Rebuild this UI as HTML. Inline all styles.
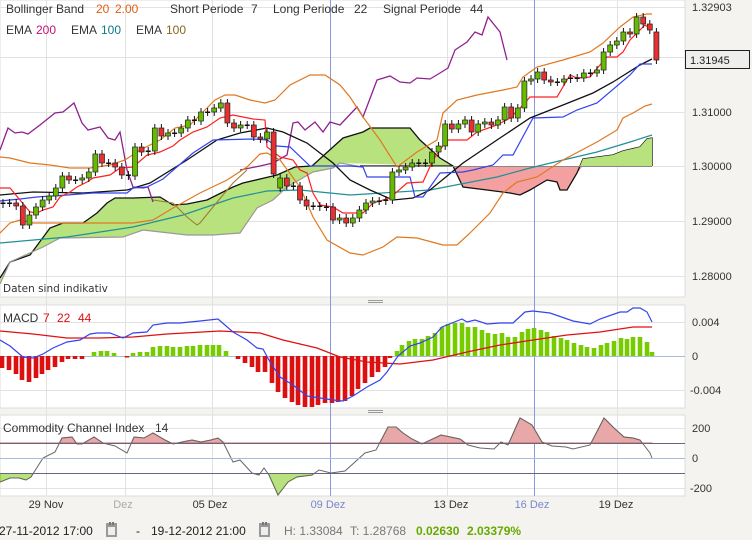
<!DOCTYPE html>
<html><head><meta charset="utf-8"><style>
html,body{margin:0;padding:0;background:#f4f3ef;}
svg{display:block;font-family:"Liberation Sans",sans-serif;}
</style></head><body>
<svg id="s" width="752" height="540" xmlns="http://www.w3.org/2000/svg">
<rect width="752" height="540" fill="#f4f3ef"/>
<rect x="0" y="0" width="685" height="297" fill="#fff" stroke="#dcdcdc"/>
<rect x="0" y="305" width="685" height="103" fill="#fff" stroke="#dcdcdc"/>
<rect x="0" y="415" width="685" height="81" fill="#fff" stroke="#dcdcdc"/>
<g stroke="#999" stroke-width="1">
<line x1="368" y1="300.5" x2="383" y2="300.5"/><line x1="368" y1="302.5" x2="383" y2="302.5"/>
<line x1="368" y1="410.5" x2="383" y2="410.5"/><line x1="368" y1="412.5" x2="383" y2="412.5"/>
</g>
<g stroke="#e2e2e2" stroke-width="1">
<line x1="0" y1="7.5" x2="685" y2="7.5"/><line x1="0" y1="57.5" x2="685" y2="57.5"/><line x1="0" y1="112.5" x2="685" y2="112.5"/>
<line x1="0" y1="166.5" x2="685" y2="166.5"/><line x1="0" y1="221.5" x2="685" y2="221.5"/><line x1="0" y1="276.5" x2="685" y2="276.5"/>
<line x1="0" y1="322.5" x2="685" y2="322.5"/><line x1="0" y1="390.5" x2="685" y2="390.5"/>
<line x1="0" y1="428.5" x2="685" y2="428.5"/><line x1="0" y1="488.5" x2="685" y2="488.5"/>
<line x1="46.5" y1="0" x2="46.5" y2="496"/><line x1="125.5" y1="0" x2="125.5" y2="496"/><line x1="212.5" y1="0" x2="212.5" y2="496"/>
<line x1="447.5" y1="0" x2="447.5" y2="496"/><line x1="617.5" y1="0" x2="617.5" y2="496"/>
</g>
<line x1="0" y1="356.5" x2="685" y2="356.5" stroke="#a8bcd8"/>
<g stroke="#8899dd" stroke-width="1"><line x1="330.5" y1="0" x2="330.5" y2="496"/><line x1="534.5" y1="0" x2="534.5" y2="496"/></g>

<polygon fill="#b8e27e" points="0,278 10,262 30,255 50,228 63,223 83,223 97,213 107,203 115,198 133,198 160,197 173,205 187,204 207,200 233,187 243,183 277,175 295,167 312,166 343,138 363,132 370,128 410,128 420,140 440,158 453,166 453,166 340,163 333,168 313,172 287,187 273,200 257,208 240,233 213,235 187,235 143,230 123,237 60,238 43,247 10,262 0,282"/>
<polyline fill="none" stroke="#111" stroke-width="1.3" points="0,278 10,262 30,255 50,228 63,223 83,223 97,213 107,203 115,198 133,198 160,197 173,205 187,204 207,200 233,187 243,183 277,175 295,167 312,166 343,138 363,132 370,128 410,128 420,140 440,158 453,166"/>
<polyline fill="none" stroke="#999" stroke-width="1.2" points="0,284 10,262 43,247 60,238 123,237 143,230 187,235 213,235 240,233 257,208 273,200 287,187 313,172 333,168 340,163 363,167"/>
<polygon fill="#f4a0a0" points="453,166 463,187 487,190 510,193 520,195 530,190 547,180 557,182 560,190 567,190 577,173 583,166"/>
<polyline fill="none" stroke="#111" stroke-width="1.3" points="360,166 453,166 463,187 487,190 510,193 520,195 530,190 547,180 557,182 560,190 567,190 577,173 583,159 613,155 623,151 640,147 647,139 652,138 652,166"/>
<polygon fill="#b8e27e" points="580,166 583,159 613,155 623,151 640,147 647,139 652,138 652,166"/>
<line x1="363" y1="166.5" x2="652" y2="166.5" stroke="#888"/>

<polyline fill="none" stroke="#209098" stroke-width="1.2" points="0,243 67,237 133,227 183,215 233,198 267,191 300,190 350,195 430,190 497,177 530,168 563,160 597,152 630,142 652,135"/>
<polyline fill="none" stroke="#a07a30" stroke-width="1.1" points="153,200 173,203 187,217 197,225 200,223 213,207 233,183 247,170"/>
<polyline fill="none" stroke="#902090" stroke-width="1.3" points="0,150 8,128 15,133 22,132 28,134 40,125 55,113 63,112 74,103 82,123 88,130 100,127 108,138 115,140 120,132 127,170 133,187 143,188 148,187 153,202"/>
<polyline fill="none" stroke="#902090" stroke-width="1.3" points="240,170 260,166 273,163 287,155 293,123 298,122 305,130 315,122 323,132 330,122 340,125 357,107 363,117 377,80 390,76 400,82 410,83 417,78 430,79 440,73 448,68 455,50 467,42 475,32 482,35 488,17 500,32 507,60"/>
<polyline fill="none" stroke="#e07820" stroke-width="1.2" points="0,157 10,158 30,163 50,165 70,168 90,168 110,165 125,160 140,150 160,140 175,128 190,125 200,115 215,100 225,95 235,95 250,100 265,103 275,100 290,85 310,75 325,75 340,85 350,97 363,117 380,140 397,167"/>
<polyline fill="none" stroke="#e07820" stroke-width="1.2" points="397,167 417,152 437,140 443,113 457,100 477,95 503,90 517,87 523,77 537,67 563,60 590,52 603,43 620,27 633,17 647,14 652,14"/>
<polyline fill="none" stroke="#e07820" stroke-width="1.2" points="0,233 10,223 20,220 33,223 133,223 153,220 173,208 200,193 227,180 247,167 260,154 267,153 280,160 300,187 313,217 327,240 350,253 363,255 383,247 397,237 417,238 443,245 457,245 470,233 490,213 503,193 517,182 537,177 563,160 597,142 617,130 623,118 633,113 645,106 652,104"/>
<polyline fill="none" stroke="#111" stroke-width="1.3" points="0,195 33,192 83,193 127,190 150,183 187,160 217,140 240,133 267,128 283,132 307,143 333,163 350,180 370,190 393,200 413,198 430,190 463,163 497,140 530,118 563,105 593,93 613,82 640,65 652,59"/>
<polyline fill="none" stroke="#3344ee" stroke-width="1.2" points="0,201 20,199 37,197 67,195 93,193 127,193 133,188 147,187 163,179 193,153 213,140 253,139 267,140 277,146 290,147 310,166 350,166 363,167 367,177 410,177 415,197 423,197 440,173 463,172 473,170 493,165 503,155 513,155 533,118 563,117 577,110 597,103 630,75 640,64 652,64"/>
<polyline fill="none" stroke="#ff2020" stroke-width="1.2" points="0,188 10,188 20,200 30,212 37,213 43,210 53,207 60,197 70,192 77,187 87,182 93,178 110,175 120,168 133,167 147,155 160,152 173,146 180,140 193,132 207,127 220,118 233,115 253,119 265,120 267,147 280,157 293,160 300,170 307,173 313,193 320,205 333,207 343,213 363,213 373,203 390,198 407,183 423,182 433,160 447,140 467,140 477,132 497,125 510,118 523,105 530,97 557,97 570,75 577,78 590,77 600,65 607,57 617,57 623,52 630,40 645,25 652,30"/>
<g id="candles"></g>

<g id="hist"></g>
<polyline fill="none" stroke="#e01010" stroke-width="1.3" points="0,331 33,334 67,338 100,338 133,337 167,334 220,331 260,333 283,340 317,348 340,357 367,362 400,364 433,360 467,352 500,345 533,340 567,335 600,332 633,327 652,327"/>
<polyline fill="none" stroke="#3344ee" stroke-width="1.2" points="0,340 10,346 23,357 33,358 43,354 53,348 67,342 80,340 90,334 97,333 110,333 123,338 133,333 147,332 153,325 167,323 180,323 200,321 218,319 233,332 247,340 257,348 263,349 270,362 280,377 293,385 307,396 320,398 333,400 343,401 353,396 367,387 380,380 387,372 398,356 410,346 420,343 433,337 442,327 462,319 467,322 475,320 487,324 500,323 513,323 525,312 533,311 550,313 573,321 590,324 600,319 620,312 627,312 633,308 640,308 647,312 652,322"/>

<defs>
<clipPath id="up"><rect x="0" y="415" width="685" height="28"/></clipPath>
<clipPath id="dn"><rect x="0" y="473" width="685" height="25"/></clipPath>
</defs>
<g id="cci"></g>
<line x1="0" y1="443.5" x2="685" y2="443.5" stroke="#666680"/>
<line x1="0" y1="458.5" x2="685" y2="458.5" stroke="#a8bcd8"/>
<line x1="0" y1="473.5" x2="685" y2="473.5" stroke="#666680"/>

<g font-size="12" fill="#333">
<text x="6" y="13">Bollinger Band</text>
<text x="96" y="13" fill="#e06010">20</text>
<text x="115" y="13" fill="#e06010">2.00</text>
<text x="170" y="13">Short Periode</text>
<text x="251" y="13">7</text>
<text x="273" y="13">Long Periode</text>
<text x="354" y="13">22</text>
<text x="383" y="13">Signal Periode</text>
<text x="470" y="13">44</text>
<text x="6" y="34">EMA</text><text x="36" y="34" fill="#c0107a">200</text>
<text x="71" y="34">EMA</text><text x="101" y="34" fill="#107888">100</text>
<text x="136" y="34">EMA</text><text x="166" y="34" fill="#8a6420">100</text>
<text x="3" y="322">MACD</text>
<text x="43" y="322" fill="#dd1010">7</text><text x="57" y="322" fill="#dd1010">22</text><text x="78" y="322" fill="#dd1010">44</text>
<text x="3" y="432">Commodity Channel Index</text>
<text x="155" y="432">14</text>
</g>
<text x="3" y="292" font-size="10.5" font-family="DejaVu Sans,sans-serif" fill="#333">Daten sind indikativ</text>

<g font-size="11" fill="#333">
<text x="692" y="11">1.32903</text>
<text x="692" y="116">1.31000</text>
<text x="692" y="170">1.30000</text>
<text x="692" y="225">1.29000</text>
<text x="692" y="280">1.28000</text>
<text x="692" y="326">0.004</text>
<text x="692" y="360">0</text>
<text x="690" y="394">-0.004</text>
<text x="692" y="432">200</text>
<text x="692" y="462">0</text>
<text x="690" y="492">-200</text>
</g>
<rect x="685.5" y="50.5" width="64" height="18" fill="#eeeeec" stroke="#222"/>
<text x="690" y="64" font-size="11" fill="#222">1.31945</text>

<g font-size="11" fill="#333" text-anchor="middle">
<text x="46" y="508">29 Nov</text>
<text x="123" y="508" fill="#aaa">Dez</text>
<text x="210" y="508">05 Dez</text>
<text x="328" y="508" fill="#7788cc">09 Dez</text>
<text x="451" y="508">13 Dez</text>
<text x="532" y="508" fill="#7788cc">16 Dez</text>
<text x="616" y="508">19 Dez</text>
</g>

<g font-size="12" fill="#222">
<text x="-1" y="535">27-11-2012 17:00</text>
<text x="136" y="535">-</text>
<text x="151" y="535">19-12-2012 21:00</text>
<text x="284" y="535" fill="#777">H: 1.33084</text>
<text x="350" y="535" fill="#777">T: 1.28768</text>
<text x="416" y="535" fill="#66aa00" font-weight="bold">0.02630</text>
<text x="467" y="535" fill="#66aa00" font-weight="bold">2.03379%</text>
</g>
<g>
<rect x="106" y="523" width="11" height="14" fill="#999"/><rect x="108" y="527" width="7" height="8" fill="#eee"/><rect x="109" y="522" width="2" height="3" fill="#777"/><rect x="112" y="522" width="2" height="3" fill="#777"/>
<rect x="259" y="523" width="11" height="14" fill="#999"/><rect x="261" y="527" width="7" height="8" fill="#eee"/><rect x="262" y="522" width="2" height="3" fill="#777"/><rect x="265" y="522" width="2" height="3" fill="#777"/>
</g>
</svg>
<script>
var NS="http://www.w3.org/2000/svg";
function el(p,t,a){var e=document.createElementNS(NS,t);for(var k in a)e.setAttribute(k,a[k]);p.appendChild(e);return e;}
var C=[203,203,206,225,215,207,200,196,188,176,180,180,178,172,154,163,163,167,175,176,147,152,151,128,136,133,133,128,120,121,112,112,108,103,123,128,125,125,137,139,132,174,178,186,186,200,206,206,207,207,220,218,223,218,210,203,201,201,200,172,170,167,163,163,163,152,146,124,129,124,120,132,124,122,125,120,107,118,108,81,79,72,80,82,82,79,78,78,73,73,70,52,45,41,32,34,17,24,30,60];
var g=document.getElementById("candles");
for(var i=0;i<C.length;i++){
 var x=3+i*6.6,c=C[i],o=i?C[i-1]:204;
 if(i==42)o=188; if(i==99)o=32;
 var t=Math.min(o,c),b=Math.max(o,c);
 el(g,"line",{x1:x,y1:t-4,x2:x,y2:b+4,stroke:"#111","stroke-width":1});
 if(b-t<1.5){el(g,"rect",{x:x-2.5,y:t-0.5,width:5,height:1.5,fill:"#111"});}
 else el(g,"rect",{x:x-2.5,y:t,width:5,height:b-t,fill:c<o?"#66bb00":"#e83030",stroke:"#222","stroke-width":0.7});
}
var H=[[2,368],[9,370],[16,374],[22,380],[29,382],[36,378],[42,374],[48,370],[55,367],[62,362],[68,359],[75,359],[82,359],[94,352],[101,351],[107,351],[114,353],[127,357],[133,353],[140,352],[147,352],[153,347],[160,346],[167,346],[173,347],[180,347],[187,346],[193,346],[200,345],[207,345],[213,345],[219,345],[226,351],[238,359],[245,363],[252,367],[258,372],[265,372],[272,383],[278,392],[285,398],[292,402],[298,405],[305,407],[312,407],[318,405],[325,403],[332,403],[338,402],[345,401],[352,396],[358,389],[365,383],[372,377],[378,372],[385,367],[390,358],[397,351],[402,345],[409,341],[415,339],[422,339],[428,336],[435,333],[442,327],[448,324],[455,323],[462,323],[468,327],[475,327],[482,330],[488,333],[495,334],[502,333],[508,337],[515,337],[522,332],[528,329],[534,328],[541,330],[547,332],[554,336],[561,338],[567,340],[574,343],[581,345],[587,347],[594,348],[601,345],[607,343],[614,341],[621,338],[627,339],[633,337],[640,337],[647,342],[652,352]];
var h=document.getElementById("hist");
H.forEach(function(p){var y=p[1],t=Math.min(y,356),b=Math.max(y,356);el(h,"rect",{x:p[0]-2.3,y:t,width:4.6,height:Math.max(b-t,1.5),fill:y<356?"#77cc00":"#dd1010"});});
var P="0,482 10,478 19,478 26,480 31,477 43,458 55,452 62,438 72,437 77,444 82,444 94,437 103,443 115,446 127,453 134,437 144,438 153,433 165,440 173,444 182,442 192,440 201,442 211,440 218,438 223,442 233,462 240,460 252,473 259,475 264,468 269,475 278,495 288,482 297,477 312,475 319,470 331,473 345,471 365,453 376,450 388,427 396,427 403,433 412,439 422,444 441,435 460,439 468,445 480,448 494,449 501,442 508,445 520,418 532,425 542,442 552,446 566,447 573,449 590,445 604,418 614,428 624,437 633,438 640,440 650,453 652,458";
var cg=document.getElementById("cci");
el(cg,"polygon",{points:P+" 652,443 0,443","fill":"#e8a8a8",stroke:"#d06060","stroke-width":1,"clip-path":"url(#up)"});
el(cg,"polygon",{points:P+" 652,473 0,473","fill":"#b8e27e",stroke:"#77cc00","stroke-width":1,"clip-path":"url(#dn)"});
el(cg,"polyline",{points:P,fill:"none",stroke:"#666","stroke-width":1});
</script>
</body></html>
